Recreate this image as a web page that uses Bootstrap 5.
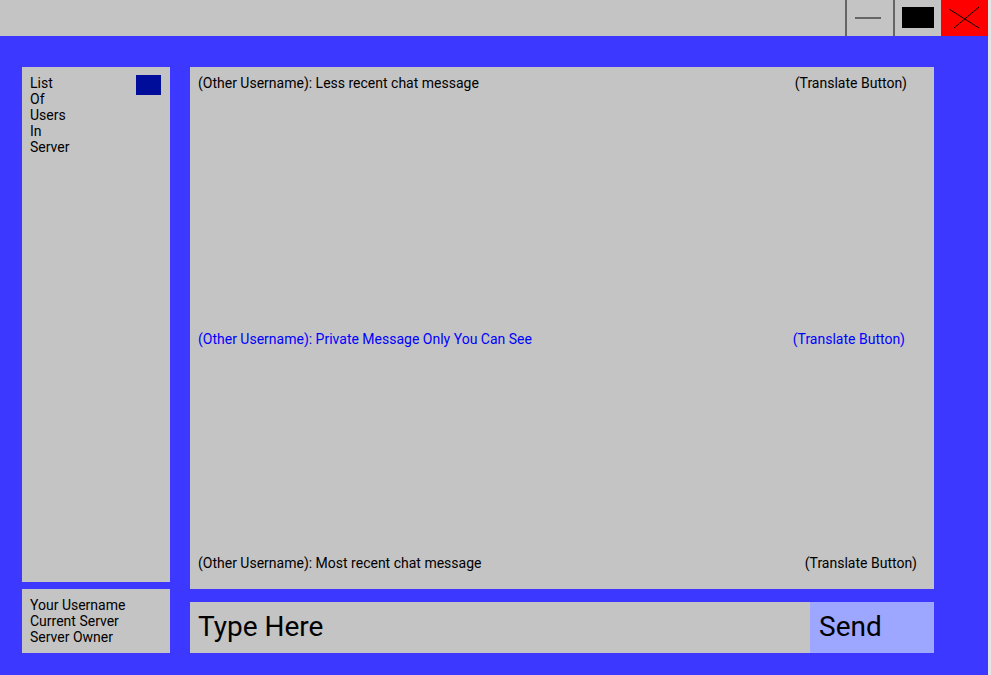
<!DOCTYPE html>
<html lang="en">
<head>
<meta charset="utf-8">
<meta name="viewport" content="width=device-width, initial-scale=1">
<title>Server Chat</title>
<link href="https://cdn.jsdelivr.net/npm/bootstrap@5.3.0/dist/css/bootstrap.min.css" rel="stylesheet">
<style>
  body { font-family: Roboto, sans-serif; font-size: 14px; line-height: 16px; color: #000; background: #e5e5e5; }
  .chat-window { background: #3d38ff; margin-right: 3px; }
  .panel { background: #c4c4c4; }
  .title-bar { background: #c4c4c4; height: 36px; }
  .title-bar button { width: 48px; border-left: 2px solid #666 !important; }
  .title-bar .close-window { width: 47px; background: red; border-left: 0 !important; }
  .workspace { padding: 31px 54px 22px 22px; gap: 20px; }
  .sidebar { width: 148px; gap: 7px; }
  .conversation { gap: 13px; }
  .users { padding: 8px 9px 8px 8px; }
  .users-toggle { width: 25px; height: 20px; background: #000d9a; }
  .messages { padding: 8px 8px 18px; }
  .older { flex: 8 1 0; padding-right: 19px; }
  .private { flex: 7 1 0; padding-right: 21px; color: #00f; }
  .newest { padding-right: 9px; }
  .compose input, .compose button { font-size: 28px; line-height: 33px; padding: 8px 8px 10px; color: #000; }
  .compose input::placeholder { color: #000; opacity: 1; }
  .compose button { width: 124px; background: #9ea7ff; padding-left: 9px; }
</style>
<script src="https://cdn.jsdelivr.net/npm/bootstrap@5.3.0/dist/js/bootstrap.bundle.min.js" defer></script>
</head>
<body>
<div class="chat-window d-flex flex-column min-vh-100">
  <header class="title-bar d-flex justify-content-end">
    <button type="button" class="border-0 bg-transparent p-0 d-flex" aria-label="Minimize">
      <svg width="46" height="36" aria-hidden="true"><path d="M8 18H34" stroke="#666" stroke-width="2"/></svg>
    </button>
    <button type="button" class="border-0 bg-transparent p-0 d-flex" aria-label="Maximize">
      <svg width="46" height="36" aria-hidden="true"><path d="M7 7h32v21H7z"/></svg>
    </button>
    <button type="button" class="close-window border-0 p-0 d-flex" aria-label="Close">
      <svg width="47" height="36" aria-hidden="true"><path d="M8 9L38 28M38 7L13 28" stroke="#000" fill="none"/></svg>
    </button>
  </header>
  <main class="workspace d-flex flex-grow-1">
    <aside class="sidebar d-flex flex-column flex-shrink-0">
      <section class="users panel d-flex justify-content-between align-items-start flex-grow-1">
        <ul class="list-unstyled mb-0">
          <li>List</li>
          <li>Of</li>
          <li>Users</li>
          <li>In</li>
          <li>Server</li>
        </ul>
        <button type="button" class="users-toggle border-0 p-0" aria-label="User options"></button>
      </section>
      <section class="panel p-2">
        <div>Your Username</div>
        <div>Current Server</div>
        <div>Server Owner</div>
      </section>
    </aside>
    <div class="conversation d-flex flex-column flex-grow-1">
      <section class="messages panel d-flex flex-column flex-grow-1">
        <div class="older d-flex justify-content-between align-items-start">
          <span>(Other Username): Less recent chat message</span>
          <button type="button" class="border-0 bg-transparent p-0 text-reset">(Translate Button)</button>
        </div>
        <div class="private d-flex justify-content-between align-items-start">
          <span>(Other Username): Private Message Only You Can See</span>
          <button type="button" class="border-0 bg-transparent p-0 text-reset">(Translate Button)</button>
        </div>
        <div class="newest d-flex justify-content-between align-items-start">
          <span>(Other Username): Most recent chat message</span>
          <button type="button" class="border-0 bg-transparent p-0 text-reset">(Translate Button)</button>
        </div>
      </section>
      <form class="compose d-flex">
        <input type="text" class="panel border-0 rounded-0 flex-grow-1" placeholder="Type Here" aria-label="Message">
        <button type="button" class="border-0 text-start flex-shrink-0">Send</button>
      </form>
    </div>
  </main>
</div>
</body>
</html>
